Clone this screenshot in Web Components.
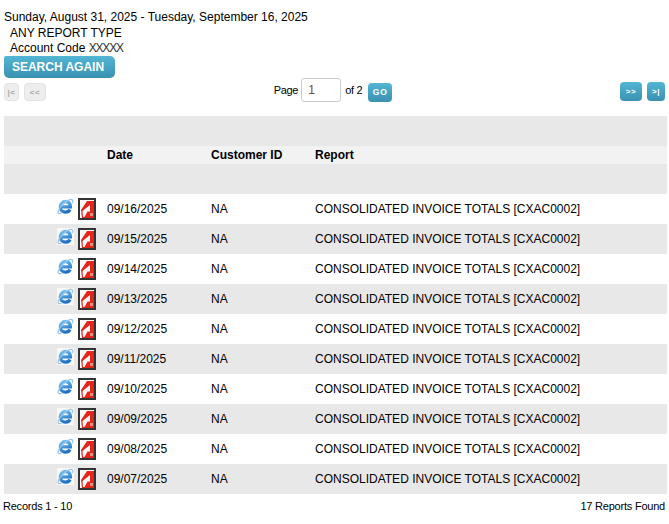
<!DOCTYPE html>
<html>
<head>
<meta charset="utf-8">
<title>Reports</title>
<style>
  html, body { margin: 0; padding: 0; background: #fff; }
  body { padding: 10px 2px 0 4px; font: 12px "Liberation Sans", Arial, sans-serif; color: #000; }
</style>
</head>
<body>
<report-summary></report-summary>
<report-pager page="1" pages="2"></report-pager>
<report-table></report-table>
<report-footer></report-footer>

<script>
class ActionButton extends HTMLElement {
    connectedCallback() {
        this.attachShadow({ mode: 'open' });
        this.shadowRoot.innerHTML = `
            <style>
                :host { display: flex; align-items: center; justify-content: center; box-sizing: border-box;
                    height: 19px; width: 22px; border-radius: 4px;
                    background: linear-gradient(#52b6d4, #3a91b0); color: #fff;
                    font: bold 8px "Liberation Sans", Arial, sans-serif; letter-spacing: .5px; }
                :host([size="large"]) { height: 22px; width: 111px; padding-right: 3px; font-size: 12px; letter-spacing: 0; border-radius: 2px 5px 5px 5px; }
                :host([disabled]) { height: 18px; background: #eee; color: #aaa; border: 1px solid #e2e2e2; }
            </style>
            <slot></slot>`;
    }
}
customElements.define('action-button', ActionButton);

class ReportSummary extends HTMLElement {
    connectedCallback() {
        this.attachShadow({ mode: 'open' });
        this.shadowRoot.innerHTML = `
            <style>
                :host { display: block; line-height: 15px; }
                .in { padding-left: 6px; }
                .first { margin-top: 1px; }
                .code { color: #333; letter-spacing: -1.2px; }
            </style>
            <div>Sunday, August 31, 2025 - Tuesday, September 16, 2025</div>
            <div class="in first">ANY REPORT TYPE</div>
            <div class="in">Account Code <span class="code">XXXXX</span></div>
            <action-button size="large">SEARCH AGAIN</action-button>`;
    }
}
customElements.define('report-summary', ReportSummary);

class ReportPager extends HTMLElement {
    connectedCallback() {
        this.attachShadow({ mode: 'open' });
        this.shadowRoot.innerHTML = `
            <style>
                :host { display: grid; grid-template-columns: 1fr auto 1fr; align-items: start; height: 24px; padding-right: 2px; }
                .side { display: flex; gap: 5px; padding-top: 5px; }
                .right { justify-content: flex-end; padding-top: 4px; }
                .mid { display: flex; align-items: center; padding-right: 3px; font-size: 11px; letter-spacing: -.3px; }
                .box { box-sizing: border-box; width: 40px; height: 24px; margin: 0 4px 0 3px; border: 1px solid #ccc; border-radius: 3px; padding: 0 6px; line-height: 22px; font-size: 12px; letter-spacing: 0; color: #7a4a20; }
                .go { margin: 4px 0 0 6px; width: 24px; font-size: 8.5px; letter-spacing: 1px; }
            </style>
            <div class="side"><action-button disabled style="width:15px">|&lt;</action-button><action-button disabled>&lt;&lt;</action-button></div>
            <div class="mid">Page<span class="box">${this.getAttribute('page')}</span>of ${this.getAttribute('pages')}<action-button class="go">GO</action-button></div>
            <div class="side right"><action-button>&gt;&gt;</action-button><action-button style="width:18px">&gt;|</action-button></div>`;
    }
}
customElements.define('report-pager', ReportPager);

class ReportIcons extends HTMLElement {
    connectedCallback() {
        this.attachShadow({ mode: 'open' });
        this.shadowRoot.innerHTML = `
            <style>:host { display: flex; align-items: flex-start; gap: 4px; justify-content: flex-end; } svg { display: block; }</style>
            <svg width="17" height="17" viewBox="0 0 17 17">
                <defs><linearGradient id="ie" x1="0.2" y1="0" x2="0.6" y2="1"><stop offset="0" stop-color="#6cbcf2"/><stop offset="1" stop-color="#1f70c6"/></linearGradient></defs>
                <rect width="17" height="17" fill="#fff" opacity=".7"/>
                <path d="M4.2 8.8h9.2c0-3.2-2.1-5.300-4.800-5.300-3 0-5.300 2.400-5.300 5.400 0 3 2.400 5.200 5.200 5.200 2 0 3.700-.9 4.500-2.600" fill="none" stroke="url(#ie)" stroke-width="3.3"/>
                <path d="M1 13.5C2.5 8.5 9 2.5 13.5 1.400c2.200-.3 2.800 1.200 1.800 3.600M1 13.500c-.4 1.800.8 2.800 3.500 1.800" fill="none" stroke="#9cc6ea" stroke-width="1.2"/>
            </svg>
            <svg width="18" height="22" viewBox="0 0 18 22">
                <rect x="1" y="1" width="16" height="20" fill="#fff" stroke="#333" stroke-width="2"/>
                <path d="M3 12 9 3h7v17H4z" fill="#e5241c"/>
                <path d="M4.500 13l7.500-6v6.500H9.500L6.500 19H5z" fill="#fff"/>
                <path d="M12 15h3v3h-3z" fill="#f58a80"/>
            </svg>`;
    }
}
customElements.define('report-icons', ReportIcons);

class ReportRow extends HTMLElement {
    connectedCallback() {
        this.attachShadow({ mode: 'open' });
        this.shadowRoot.innerHTML = `
            <style>
                :host { display: grid; grid-template-columns: 103px 104px 104px 1fr; align-items: center; height: 30px; }
                :host([odd]) { background: #e8e8e8; }
                .ic { padding-right: 11px; }
            </style>
            <report-icons class="ic"></report-icons>
            <div>${this.getAttribute('date')}</div>
            <div>NA</div>
            <div>CONSOLIDATED INVOICE TOTALS [CXAC0002]</div>`;
    }
}
customElements.define('report-row', ReportRow);

class ReportTable extends HTMLElement {
    connectedCallback() {
        this.attachShadow({ mode: 'open' });
        const dates = ['09/16/2025','09/15/2025','09/14/2025','09/13/2025','09/12/2025','09/11/2025','09/10/2025','09/09/2025','09/08/2025','09/07/2025'];
        this.shadowRoot.innerHTML = `
            <style>
                :host { display: block; margin-top: 14px; }
                .band { height: 30px; background: #e8e8e8; }
                .head { display: grid; grid-template-columns: 104px 104px 1fr; padding-left: 103px; height: 18px; align-items: center; background: #f2f2f2; font-weight: bold; }
            </style>
            <div class="band"></div>
            <div class="head"><div>Date</div><div>Customer ID</div><div>Report</div></div>
            <div class="band"></div>
            ${dates.map((d, i) => `<report-row date="${d}"${i % 2 ? ' odd' : ''}></report-row>`).join('')}`;
    }
}
customElements.define('report-table', ReportTable);

class ReportFooter extends HTMLElement {
    connectedCallback() {
        this.attachShadow({ mode: 'open' });
        this.shadowRoot.innerHTML = `
            <style>:host { display: flex; justify-content: space-between; padding: 5px 2px 0 0; margin-left: -1px; font-size: 11px; line-height: 14px; letter-spacing: -.22px; }</style>
            <div>Records 1 - 10</div><div>17 Reports Found</div>`;
    }
}
customElements.define('report-footer', ReportFooter);
</script>
</body>
</html>
